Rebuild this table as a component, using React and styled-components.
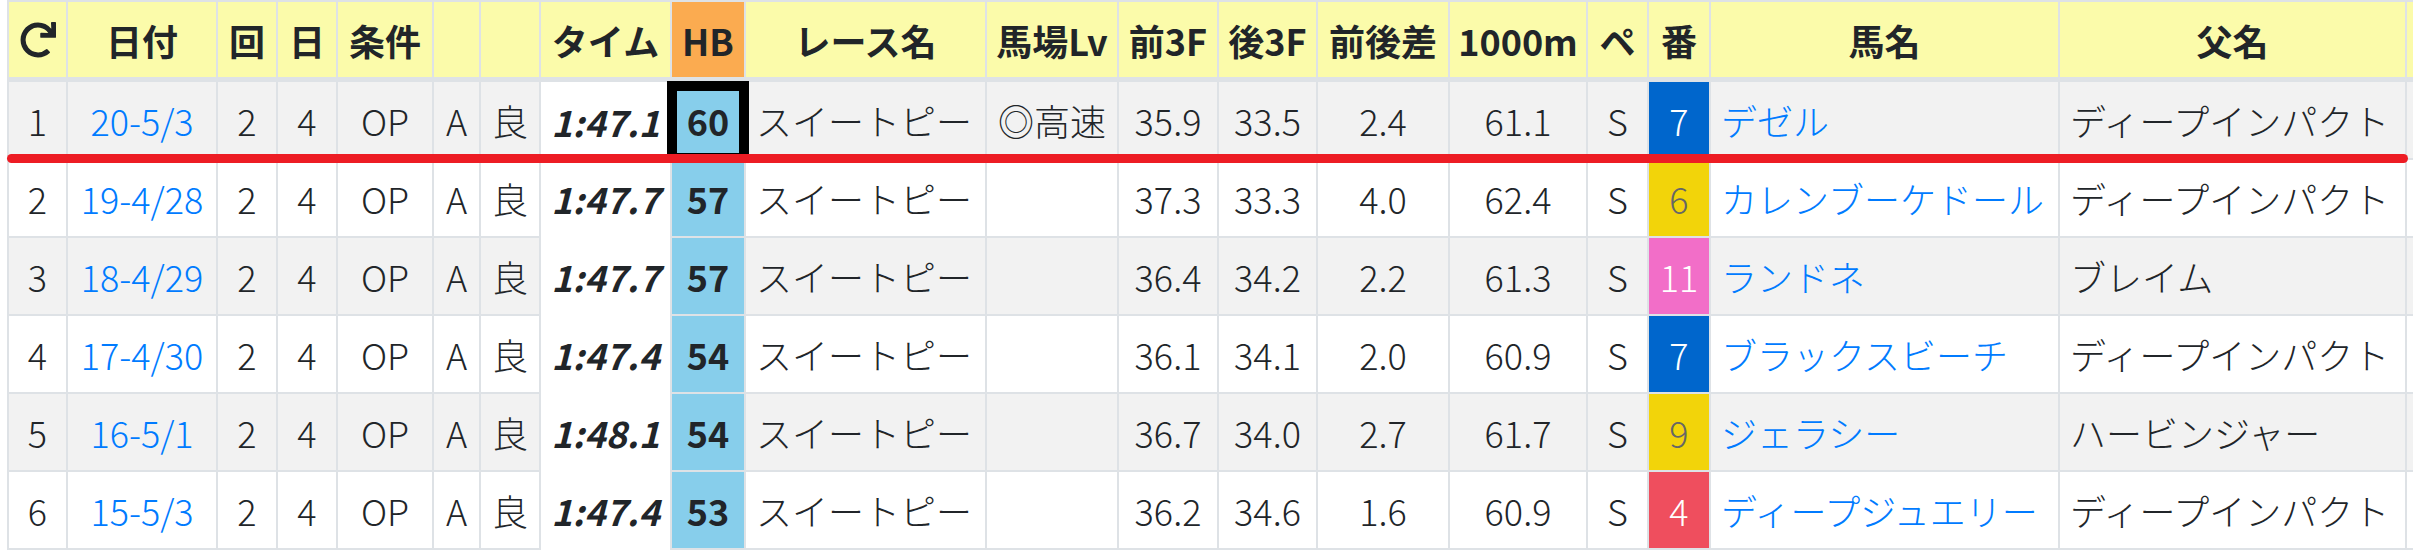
import React from "react";
import styled, { createGlobalStyle } from "styled-components";
import { FaRedo } from "react-icons/fa";

const GlobalStyle = createGlobalStyle`
  html, body {
    margin: 0;
    padding: 0;
    background: #ffffff;
    overflow: hidden;
  }
  body {
    font-family: "Noto Sans CJK JP", "Noto Sans", sans-serif;
    color: #212529;
  }
`;

const Wrapper = styled.div`
  position: relative;
  padding-left: 7px;
  width: 2600px;
`;

const Table = styled.table`
  border-collapse: collapse;
  table-layout: fixed;
  width: ${(p) => p.$width}px;
  font-size: 36px;
  line-height: 54px;
  font-weight: 300;
`;

const Col = styled.col`
  width: ${(p) => p.$w}px;
`;

const HeadCell = styled.th`
  background: ${(p) => (p.$accent ? "#fbab50" : "#fbfbaa")};
  border: 2px solid #dee2e6;
  border-bottom-width: 5px;
  padding: 11px 4px 10px;
  font-weight: 700;
  text-align: center;
  white-space: nowrap;
  overflow: hidden;
  vertical-align: middle;
`;

const RefreshIcon = styled(FaRedo)`
  width: 36px;
  height: 36px;
  display: block;
  margin: 0 auto;
  color: #212529;
`;

const Row = styled.tr`
  background: ${(p) => (p.$striped ? "#f2f2f2" : "#ffffff")};
`;

const Cell = styled.td`
  border: 2px solid #dee2e6;
  padding: 11px ${(p) => (p.$align === "left" ? "10px" : "4px")};
  text-align: ${(p) => p.$align || "center"};
  white-space: nowrap;
  overflow: hidden;
  vertical-align: middle;
`;

const TimeCell = styled(Cell)`
  background: #ffffff;
  border-top: none;
  border-bottom: none;
  font-weight: 700;
  font-style: italic;
`;

const HbCell = styled(Cell)`
  position: relative;
  overflow: visible;
  background: #87ceeb;
  font-weight: 700;

  ${(p) =>
    p.$highlight &&
    `
    &::after {
      content: "";
      position: absolute;
      top: -1px;
      left: -5px;
      right: -5px;
      bottom: -5px;
      border: 10px solid #000000;
      pointer-events: none;
    }
  `}
`;

const WakuCell = styled(Cell)`
  background: ${(p) => p.$bg};
  color: ${(p) => p.$fg};
`;

const NameLink = styled.a`
  color: #007bff;
  text-decoration: none;
`;

const RedLine = styled.div`
  position: absolute;
  left: 7px;
  top: 154px;
  width: 2401px;
  height: 9px;
  border-radius: 5px;
  background: #ed1c24;
  z-index: 2;
`;

const widths = [59, 150, 60, 60, 96, 47, 60, 131, 74, 241, 132, 100, 99, 132, 138, 61, 62, 349, 347, 120];

const headers = [
  { key: "icon" },
  { label: "日付" },
  { label: "回" },
  { label: "日" },
  { label: "条件" },
  { label: "" },
  { label: "" },
  { label: "タイム" },
  { label: "HB", accent: true },
  { label: "レース名" },
  { label: "馬場Lv" },
  { label: "前3F" },
  { label: "後3F" },
  { label: "前後差" },
  { label: "1000m" },
  { label: "ペ" },
  { label: "番" },
  { label: "馬名" },
  { label: "父名" },
  { label: "" },
];

const waku = {
  blue: { bg: "#0066cc", fg: "#ffffff" },
  yellow: { bg: "#f2d40a", fg: "#666666" },
  pink: { bg: "#f26ec8", fg: "#ffffff" },
  red: { bg: "#ef4e5e", fg: "#ffffff" },
};

const rows = [
  { no: 1, date: "20-5/3", time: "1:47.1", hb: 60, lv: "◎高速", f3: "35.9", l3: "33.5", diff: "2.4", k: "61.1", num: 7, w: "blue", horse: "デゼル", sire: "ディープインパクト" },
  { no: 2, date: "19-4/28", time: "1:47.7", hb: 57, lv: "", f3: "37.3", l3: "33.3", diff: "4.0", k: "62.4", num: 6, w: "yellow", horse: "カレンブーケドール", sire: "ディープインパクト" },
  { no: 3, date: "18-4/29", time: "1:47.7", hb: 57, lv: "", f3: "36.4", l3: "34.2", diff: "2.2", k: "61.3", num: 11, w: "pink", horse: "ランドネ", sire: "ブレイム" },
  { no: 4, date: "17-4/30", time: "1:47.4", hb: 54, lv: "", f3: "36.1", l3: "34.1", diff: "2.0", k: "60.9", num: 7, w: "blue", horse: "ブラックスビーチ", sire: "ディープインパクト" },
  { no: 5, date: "16-5/1", time: "1:48.1", hb: 54, lv: "", f3: "36.7", l3: "34.0", diff: "2.7", k: "61.7", num: 9, w: "yellow", horse: "ジェラシー", sire: "ハービンジャー" },
  { no: 6, date: "15-5/3", time: "1:47.4", hb: 53, lv: "", f3: "36.2", l3: "34.6", diff: "1.6", k: "60.9", num: 4, w: "red", horse: "ディープジュエリー", sire: "ディープインパクト" },
];

export default function App() {
  const total = widths.reduce((a, b) => a + b, 0);
  return (
    <>
      <GlobalStyle />
      <Wrapper>
        <Table $width={total}>
          <colgroup>
            {widths.map((w, i) => (
              <Col key={i} $w={w} />
            ))}
          </colgroup>
          <thead>
            <tr>
              {headers.map((h, i) => (
                <HeadCell key={i} $accent={h.accent}>
                  {h.key === "icon" ? <RefreshIcon /> : h.label}
                </HeadCell>
              ))}
            </tr>
          </thead>
          <tbody>
            {rows.map((r, i) => (
              <Row key={r.no} $striped={i % 2 === 0}>
                <Cell>{r.no}</Cell>
                <Cell>
                  <NameLink href="#">{r.date}</NameLink>
                </Cell>
                <Cell>2</Cell>
                <Cell>4</Cell>
                <Cell>OP</Cell>
                <Cell>A</Cell>
                <Cell>良</Cell>
                <TimeCell>{r.time}</TimeCell>
                <HbCell $highlight={i === 0}>{r.hb}</HbCell>
                <Cell $align="left">スイートピー</Cell>
                <Cell>{r.lv}</Cell>
                <Cell>{r.f3}</Cell>
                <Cell>{r.l3}</Cell>
                <Cell>{r.diff}</Cell>
                <Cell>{r.k}</Cell>
                <Cell>S</Cell>
                <WakuCell $bg={waku[r.w].bg} $fg={waku[r.w].fg}>
                  {r.num}
                </WakuCell>
                <Cell $align="left">
                  <NameLink href="#">{r.horse}</NameLink>
                </Cell>
                <Cell $align="left">{r.sire}</Cell>
                <Cell />
              </Row>
            ))}
          </tbody>
        </Table>
        <RedLine />
      </Wrapper>
    </>
  );
}
